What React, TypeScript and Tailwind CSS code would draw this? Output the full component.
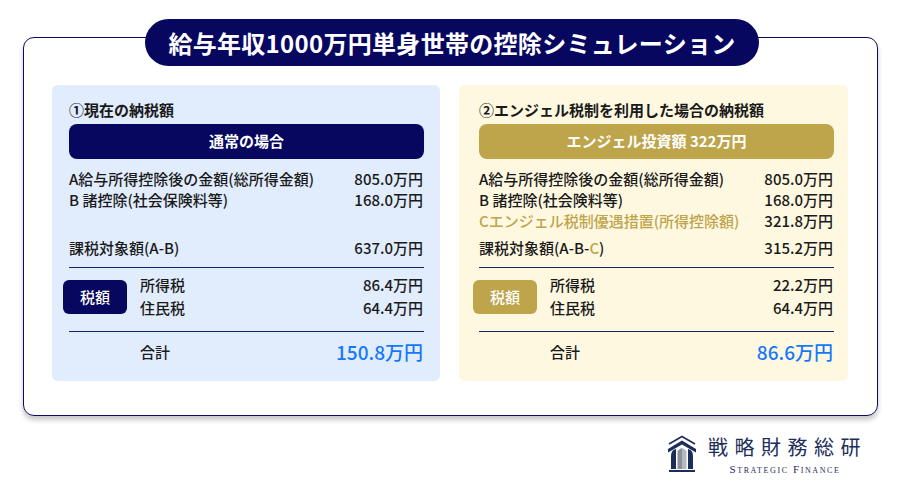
import React from "react";

type Row = { label: React.ReactNode; value: string; gold?: boolean };

type PanelProps = {
  heading: string;
  banner: string;
  rows: Row[];
  taxable: React.ReactNode;
  taxableValue: string;
  incomeTax: string;
  residentTax: string;
  total: string;
  variant: "blue" | "gold";
};

function Panel({ heading, banner, rows, taxable, taxableValue, incomeTax, residentTax, total, variant }: PanelProps) {
  const blue = variant === "blue";
  return (
    <div
      className={
        blue
          ? "flex h-[296px] w-[388px] flex-col rounded-md bg-[#e1ecfd] pl-[17px] pr-[16px] pt-[16px]"
          : "flex h-[296px] w-[389px] flex-col rounded-md bg-[#fef8e1] pl-[20px] pr-[14px] pt-[16px]"
      }
    >
      <div className="h-[18px] text-[15px] font-bold leading-[18px] text-[#1a1a1a]">{heading}</div>
      <div
        className={
          blue
            ? "mt-[5px] flex h-[35px] items-center justify-center rounded-lg bg-[#07075f] text-[15px] font-bold text-white"
            : "mt-[5px] flex h-[35px] items-center justify-center rounded-lg bg-[#bea44b] text-[15px] font-bold text-white"
        }
      >
        {banner}
      </div>

      <div className="mt-[10px] flex flex-col">
        {rows.map((row, i) => (
          <div
            key={i}
            className={
              row.gold
                ? "flex h-[21px] items-center justify-between text-[15px] font-medium text-[#bea44b]"
                : "flex h-[21px] items-center justify-between text-[15px] font-medium text-[#1a1a1a]"
            }
          >
            <span>{row.label}</span>
            <span className="pr-[1px] text-[#1a1a1a]">{row.value}</span>
          </div>
        ))}
        <div className="mt-[6px] flex h-[21px] items-center justify-between text-[15px] font-medium text-[#1a1a1a]">
          <span>{taxable}</span>
          <span className="pr-[1px]">{taxableValue}</span>
        </div>
      </div>

      <div className="mt-[8px] h-px bg-[#16216b]" />

      <div className="flex h-[63px] items-center pb-[5px]">
        <div
          className={
            blue
              ? "ml-[-6px] flex h-[34px] w-[64px] items-center justify-center rounded-md bg-[#07075f] text-[15px] font-medium text-white"
              : "ml-[-6px] flex h-[34px] w-[64px] items-center justify-center rounded-md bg-[#bea44b] text-[15px] font-medium text-white"
          }
        >
          税額
        </div>
        <div className="ml-[13px] flex flex-1 flex-col text-[15px] font-medium text-[#1a1a1a]">
          <div className="flex h-[23px] items-center justify-between">
            <span>所得税</span>
            <span className="pr-[1px]">{incomeTax}</span>
          </div>
          <div className="flex h-[23px] items-center justify-between">
            <span>住民税</span>
            <span className="pr-[1px]">{residentTax}</span>
          </div>
        </div>
      </div>

      <div className="h-px bg-[#16216b]" />

      <div className="flex h-[40px] items-center justify-between pl-[71px]">
        <span className="text-[15px] font-medium text-[#1a1a1a]">合計</span>
        <span className="pr-[1px] text-[19px] font-medium text-[#1578fa]">{total}</span>
      </div>
    </div>
  );
}

function LogoMark() {
  return (
    <svg width="30" height="38" viewBox="0 0 30 38">
      <path d="M2 9 L15 1.5 L28 9" fill="none" stroke="#1d2d5a" strokeWidth="1.6" />
      <path d="M1 14 L15 5.5 L29 14 L29 17.5 L15 9.5 L1 17.5 Z" fill="#1d2d5a" />
      <path d="M4 34 L4 21 Q4 15 9 14 L9 34 Z" fill="#1d2d5a" />
      <path d="M26 34 L26 21 Q26 15 21 14 L21 34 Z" fill="#1d2d5a" />
      <path d="M10.5 34 L10.5 16 Q13 13.5 15 13 L15 34 Z" fill="#8a8f99" />
      <path d="M19.5 34 L19.5 16 Q17 13.5 15 13 L15 34 Z" fill="#b4b8c0" />
      <rect x="2" y="35" width="26" height="2" fill="#1d2d5a" />
    </svg>
  );
}

export default function App() {
  return (
    <div
      className="relative h-[494px] w-[900px] overflow-hidden bg-white"
      style={{ fontFamily: '"Noto Sans CJK JP", "Noto Sans", sans-serif' }}
    >
      <div className="pt-[37px] pl-[23px]">
        <div className="relative h-[379px] w-[855px] rounded-[11px] border border-[#0b0b5e] shadow-[0_4px_5px_rgba(0,0,0,0.22)]">
          <div className="absolute left-[121px] top-[-19px] flex h-[47px] w-[614px] items-center justify-center rounded-full bg-[#07075f] text-[24px] font-bold tracking-[0.3px] text-white">
            給与年収1000万円単身世帯の控除シミュレーション
          </div>

          <div className="flex gap-[19px] pl-[28px] pt-[47px]">
            <Panel
              variant="blue"
              heading="①現在の納税額"
              banner="通常の場合"
              rows={[
                { label: "A給与所得控除後の金額(総所得金額)", value: "805.0万円" },
                { label: "B 諸控除(社会保険料等)", value: "168.0万円" },
                { label: "", value: "" },
              ]}
              taxable="課税対象額(A-B)"
              taxableValue="637.0万円"
              incomeTax="86.4万円"
              residentTax="64.4万円"
              total="150.8万円"
            />
            <Panel
              variant="gold"
              heading="②エンジェル税制を利用した場合の納税額"
              banner="エンジェル投資額 322万円"
              rows={[
                { label: "A給与所得控除後の金額(総所得金額)", value: "805.0万円" },
                { label: "B 諸控除(社会険料等)", value: "168.0万円" },
                { label: "Cエンジェル税制優遇措置(所得控除額)", value: "321.8万円", gold: true },
              ]}
              taxable={
                <>
                  課税対象額(A-B-<span className="text-[#bea44b]">C</span>)
                </>
              }
              taxableValue="315.2万円"
              incomeTax="22.2万円"
              residentTax="64.4万円"
              total="86.6万円"
            />
          </div>
        </div>
      </div>

      <div className="absolute left-[667px] top-[435px] flex items-start gap-[11px] text-[#1d2d5a]">
        <LogoMark />
        <div className="flex flex-col items-center pt-[1px]">
          <div className="text-[20px] font-normal leading-[22px] tracking-[6.5px]">戦略財務総研</div>
          <div
            className="mt-[6px] pr-[5px] text-[11px] leading-[10px] tracking-[1.6px]"
            style={{ fontVariant: "small-caps", fontFamily: '"Liberation Serif", serif' }}
          >
            Strategic Finance
          </div>
        </div>
      </div>
    </div>
  );
}
